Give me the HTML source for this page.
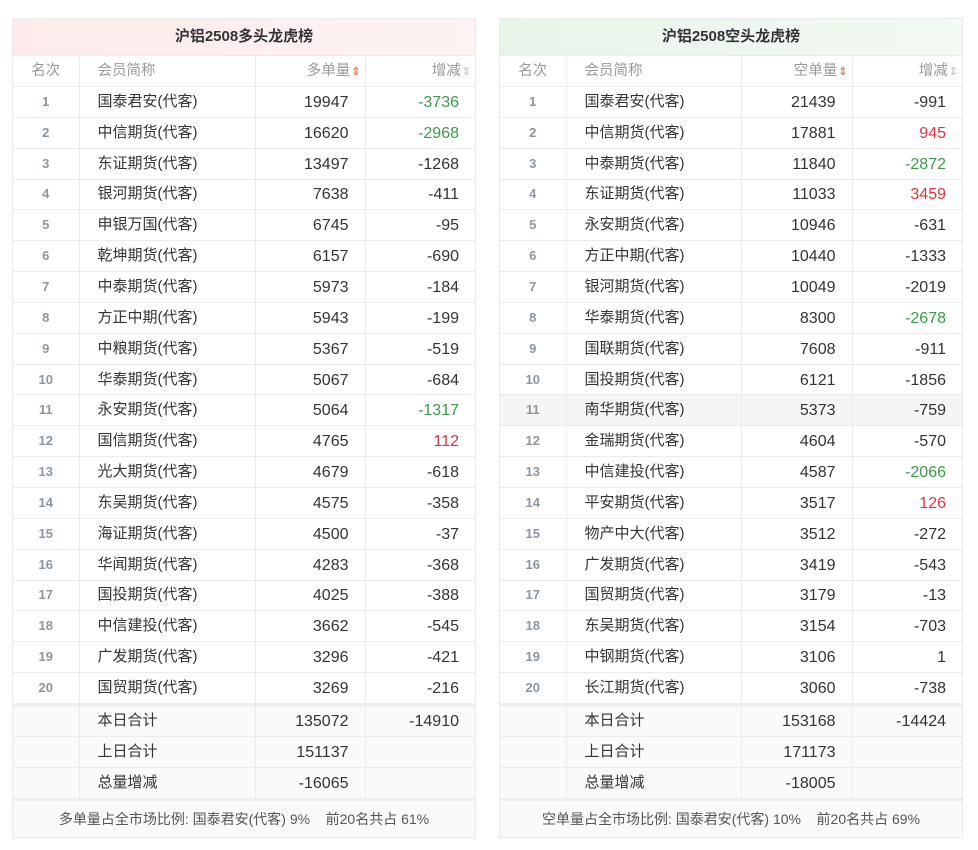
<!DOCTYPE html>
<html><head><meta charset="utf-8"><style>
*{margin:0;padding:0;box-sizing:border-box}
body{width:978px;height:850px;background:#fff;font-family:"Liberation Sans","Noto Sans CJK SC",sans-serif;font-size:15px;color:#333;position:relative}
.t{position:absolute;top:18px;width:464px;border:1px solid #ebebeb}
.t1{left:12px}.t2{left:499px}
.h{height:36px;line-height:36px;text-align:center;font-weight:bold;font-size:15px;color:#333}
.t1 .h{background:linear-gradient(90deg,#fdebeb,#fdf3f3)}
.t2 .h{background:linear-gradient(90deg,#e8f4ea,#f3f9f3)}
table{border-collapse:collapse;width:100%;table-layout:fixed}
td{height:30.85px;border-top:1px solid #ebebeb;border-left:1px solid #ebebeb;padding:0;line-height:20px}
td:first-child{border-left:none;text-align:center;font-weight:bold;color:#8c96a0;font-size:13px}
td.n{padding-left:18px}
td.r{text-align:right;padding-right:16px;font-size:16px;padding-top:2px}
tr.hd td{color:#999;font-weight:normal;font-size:14.5px;height:31px}
tr.hd td.r{padding-right:4px;font-size:14.5px;padding-top:0}
.ar{font-size:11px;color:#bbb;margin-left:1px}
.ar.o{color:#e05a2a}
.g{color:#3a9a4a}.red{color:#d9363e}
tr.hv td{background:#f5f5f5}
tr.s td{background:#fafafa;height:31px}
tr.sep td{height:2px;background:#eee;border:none;padding:0;line-height:0}
.f{border-top:3px solid #eee;height:39px;line-height:36px;text-align:center;background:#fafafa;color:#555;font-size:14px}
</style></head><body>
<div class="t t1"><div class="h">沪铝2508多头龙虎榜</div>
<table><colgroup><col style="width:66px"><col style="width:176px"><col style="width:110px"><col></colgroup>
<tr class="hd"><td>名次</td><td class="n">会员简称</td><td class="r">多单量<span class="ar o">⇕</span></td><td class="r">增减<span class="ar">⇕</span></td></tr>
<tr><td>1</td><td class="n">国泰君安(代客)</td><td class="r">19947</td><td class="r g">-3736</td></tr>
<tr><td>2</td><td class="n">中信期货(代客)</td><td class="r">16620</td><td class="r g">-2968</td></tr>
<tr><td>3</td><td class="n">东证期货(代客)</td><td class="r">13497</td><td class="r">-1268</td></tr>
<tr><td>4</td><td class="n">银河期货(代客)</td><td class="r">7638</td><td class="r">-411</td></tr>
<tr><td>5</td><td class="n">申银万国(代客)</td><td class="r">6745</td><td class="r">-95</td></tr>
<tr><td>6</td><td class="n">乾坤期货(代客)</td><td class="r">6157</td><td class="r">-690</td></tr>
<tr><td>7</td><td class="n">中泰期货(代客)</td><td class="r">5973</td><td class="r">-184</td></tr>
<tr><td>8</td><td class="n">方正中期(代客)</td><td class="r">5943</td><td class="r">-199</td></tr>
<tr><td>9</td><td class="n">中粮期货(代客)</td><td class="r">5367</td><td class="r">-519</td></tr>
<tr><td>10</td><td class="n">华泰期货(代客)</td><td class="r">5067</td><td class="r">-684</td></tr>
<tr><td>11</td><td class="n">永安期货(代客)</td><td class="r">5064</td><td class="r g">-1317</td></tr>
<tr><td>12</td><td class="n">国信期货(代客)</td><td class="r">4765</td><td class="r red">112</td></tr>
<tr><td>13</td><td class="n">光大期货(代客)</td><td class="r">4679</td><td class="r">-618</td></tr>
<tr><td>14</td><td class="n">东吴期货(代客)</td><td class="r">4575</td><td class="r">-358</td></tr>
<tr><td>15</td><td class="n">海证期货(代客)</td><td class="r">4500</td><td class="r">-37</td></tr>
<tr><td>16</td><td class="n">华闻期货(代客)</td><td class="r">4283</td><td class="r">-368</td></tr>
<tr><td>17</td><td class="n">国投期货(代客)</td><td class="r">4025</td><td class="r">-388</td></tr>
<tr><td>18</td><td class="n">中信建投(代客)</td><td class="r">3662</td><td class="r">-545</td></tr>
<tr><td>19</td><td class="n">广发期货(代客)</td><td class="r">3296</td><td class="r">-421</td></tr>
<tr><td>20</td><td class="n">国贸期货(代客)</td><td class="r">3269</td><td class="r">-216</td></tr>
<tr class="sep"><td></td><td></td><td></td><td></td></tr>
<tr class="s"><td></td><td class="n">本日合计</td><td class="r">135072</td><td class="r">-14910</td></tr>
<tr class="s"><td></td><td class="n">上日合计</td><td class="r">151137</td><td class="r"></td></tr>
<tr class="s"><td></td><td class="n">总量增减</td><td class="r">-16065</td><td class="r"></td></tr>
</table>
<div class="f">多单量占全市场比例: 国泰君安(代客) 9% &nbsp;&nbsp; 前20名共占 61%</div></div>

<div class="t t2"><div class="h">沪铝2508空头龙虎榜</div>
<table><colgroup><col style="width:66px"><col style="width:175px"><col style="width:111px"><col></colgroup>
<tr class="hd"><td>名次</td><td class="n">会员简称</td><td class="r">空单量<span class="ar o">⇕</span></td><td class="r">增减<span class="ar">⇕</span></td></tr>
<tr><td>1</td><td class="n">国泰君安(代客)</td><td class="r">21439</td><td class="r">-991</td></tr>
<tr><td>2</td><td class="n">中信期货(代客)</td><td class="r">17881</td><td class="r red">945</td></tr>
<tr><td>3</td><td class="n">中泰期货(代客)</td><td class="r">11840</td><td class="r g">-2872</td></tr>
<tr><td>4</td><td class="n">东证期货(代客)</td><td class="r">11033</td><td class="r red">3459</td></tr>
<tr><td>5</td><td class="n">永安期货(代客)</td><td class="r">10946</td><td class="r">-631</td></tr>
<tr><td>6</td><td class="n">方正中期(代客)</td><td class="r">10440</td><td class="r">-1333</td></tr>
<tr><td>7</td><td class="n">银河期货(代客)</td><td class="r">10049</td><td class="r">-2019</td></tr>
<tr><td>8</td><td class="n">华泰期货(代客)</td><td class="r">8300</td><td class="r g">-2678</td></tr>
<tr><td>9</td><td class="n">国联期货(代客)</td><td class="r">7608</td><td class="r">-911</td></tr>
<tr><td>10</td><td class="n">国投期货(代客)</td><td class="r">6121</td><td class="r">-1856</td></tr>
<tr class="hv"><td>11</td><td class="n">南华期货(代客)</td><td class="r">5373</td><td class="r">-759</td></tr>
<tr><td>12</td><td class="n">金瑞期货(代客)</td><td class="r">4604</td><td class="r">-570</td></tr>
<tr><td>13</td><td class="n">中信建投(代客)</td><td class="r">4587</td><td class="r g">-2066</td></tr>
<tr><td>14</td><td class="n">平安期货(代客)</td><td class="r">3517</td><td class="r red">126</td></tr>
<tr><td>15</td><td class="n">物产中大(代客)</td><td class="r">3512</td><td class="r">-272</td></tr>
<tr><td>16</td><td class="n">广发期货(代客)</td><td class="r">3419</td><td class="r">-543</td></tr>
<tr><td>17</td><td class="n">国贸期货(代客)</td><td class="r">3179</td><td class="r">-13</td></tr>
<tr><td>18</td><td class="n">东吴期货(代客)</td><td class="r">3154</td><td class="r">-703</td></tr>
<tr><td>19</td><td class="n">中钢期货(代客)</td><td class="r">3106</td><td class="r">1</td></tr>
<tr><td>20</td><td class="n">长江期货(代客)</td><td class="r">3060</td><td class="r">-738</td></tr>
<tr class="sep"><td></td><td></td><td></td><td></td></tr>
<tr class="s"><td></td><td class="n">本日合计</td><td class="r">153168</td><td class="r">-14424</td></tr>
<tr class="s"><td></td><td class="n">上日合计</td><td class="r">171173</td><td class="r"></td></tr>
<tr class="s"><td></td><td class="n">总量增减</td><td class="r">-18005</td><td class="r"></td></tr>
</table>
<div class="f">空单量占全市场比例: 国泰君安(代客) 10% &nbsp;&nbsp; 前20名共占 69%</div></div>
</body></html>
